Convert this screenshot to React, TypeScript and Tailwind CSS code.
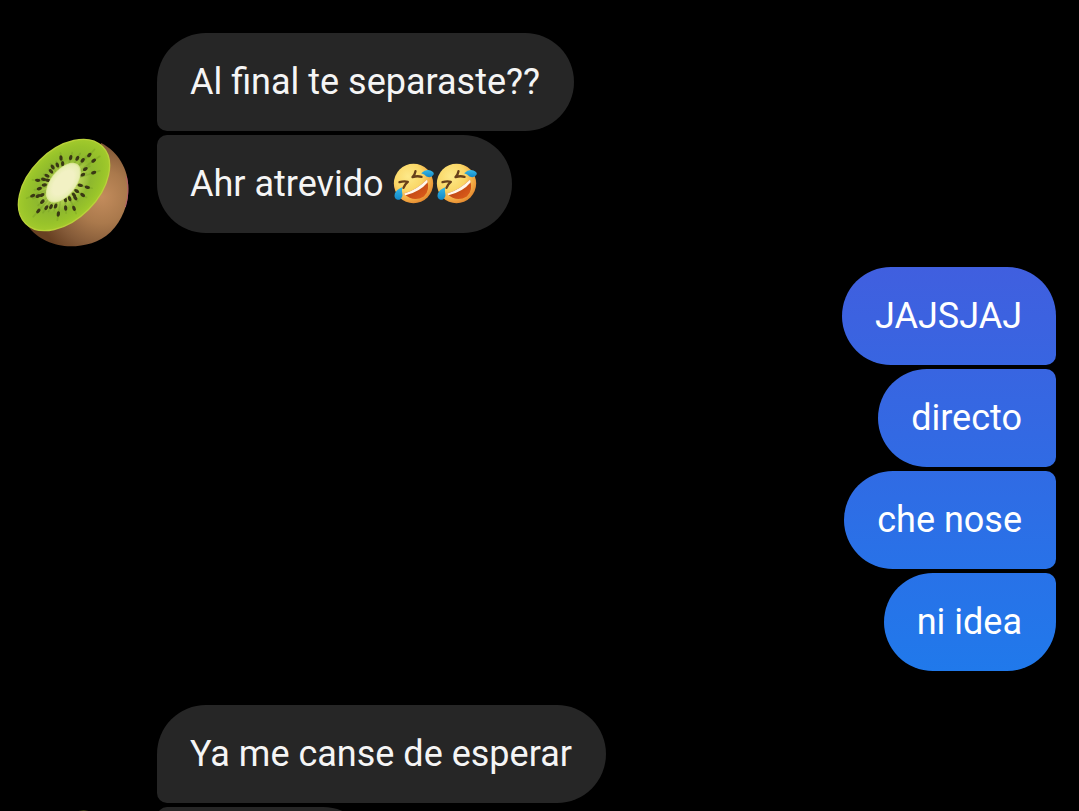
// App.tsx
import React from "react";
import clsx from "clsx";

// seed positions on the cut face of the kiwi
const seeds = [
  [268, 90], [281, 107], [256, 132], [281, 143], [248, 106], [232, 100],
  [212, 98], [188, 116], [183, 99], [172, 120], [153, 139], [158, 126],
  [141, 152], [113, 166], [131, 163], [144, 166], [133, 180], [118, 191],
  [98, 212], [114, 213], [126, 210], [127, 230], [115, 258], [139, 248],
  [153, 245], [175, 267], [168, 223], [167, 243], [196, 224], [197, 249],
  [209, 221], [222, 250], [222, 210], [226, 219], [248, 210], [230, 198],
  [241, 181], [262, 187], [248, 149],
];

const CORE_X = 190;
const CORE_Y = 173;

function KiwiAvatar() {
  return (
    <svg
      viewBox="51 30 339 336"
      className="block h-28 w-[113px] shrink-0"
      role="img"
      aria-label="Kiwi"
    >
      <defs>
        <radialGradient id="skin" gradientUnits="userSpaceOnUse" cx="305" cy="215" r="200">
          <stop offset="0" stopColor="#c38c5c" />
          <stop offset="0.4" stopColor="#aa794c" />
          <stop offset="0.75" stopColor="#845a38" />
          <stop offset="1" stopColor="#684022" />
        </radialGradient>
        <radialGradient id="flesh">
          <stop offset="0.3" stopColor="#bdd65c" />
          <stop offset="0.6" stopColor="#8eb82e" />
          <stop offset="0.85" stopColor="#98c32a" />
          <stop offset="1" stopColor="#a2ca2c" />
        </radialGradient>
        <radialGradient id="core">
          <stop offset="0.6" stopColor="#f2f1c4" />
          <stop offset="0.9" stopColor="#e8eeb2" />
          <stop offset="1" stopColor="#d4e28a" />
        </radialGradient>
      </defs>
      <path
        d="M304 54C354 80 385 132 385 190C385 240 366 287 332 321C298 353 254 364 211 364C165 364 109 342 82 300Z"
        fill="url(#skin)"
      />
      <path d="M379 155Q390 200 376 246" fill="none" stroke="#b5606c" strokeWidth="3" />
      <ellipse
        cx="192"
        cy="180"
        rx="163"
        ry="104"
        transform="rotate(-45 192 180)"
        fill="url(#flesh)"
        stroke="#b9d23a"
        strokeWidth="4"
      />
      {/* darker rays between core and rim */}
      {seeds.map(([x, y], i) => (
        <line
          key={i}
          x1={CORE_X}
          y1={CORE_Y}
          x2={CORE_X + (x - CORE_X) * 1.2}
          y2={CORE_Y + (y - CORE_Y) * 1.2}
          stroke="#60891a"
          strokeOpacity="0.25"
          strokeWidth="5"
          strokeLinecap="round"
        />
      ))}
      {seeds.map(([x, y], i) => (
        <ellipse
          key={i}
          cx={x}
          cy={y}
          rx="8"
          ry="5"
          transform={`rotate(${(Math.atan2(y - CORE_Y, x - CORE_X) * 180) / Math.PI} ${x} ${y})`}
          fill="#3a3814"
        />
      ))}
      <ellipse
        cx={CORE_X}
        cy={CORE_Y}
        rx="70"
        ry="38"
        transform="rotate(-52 190 173)"
        fill="url(#core)"
      />
    </svg>
  );
}

function RoflEmoji() {
  return (
    <svg
      viewBox="35.5 37.5 129 129"
      className="inline-block size-[43px] align-top"
      role="img"
      aria-label="🤣"
    >
      <defs>
        <radialGradient id="face" cx="0.36" cy="0.32" r="0.72">
          <stop offset="0" stopColor="#fde98a" />
          <stop offset="0.5" stopColor="#fad766" />
          <stop offset="0.8" stopColor="#f3ab44" />
          <stop offset="1" stopColor="#e58a30" />
        </radialGradient>
        <linearGradient id="mouth" x1="0" y1="0" x2="1" y2="1">
          <stop offset="0" stopColor="#a8360e" />
          <stop offset="1" stopColor="#e2601c" />
        </linearGradient>
        <linearGradient id="tear" x1="0" y1="0" x2="0" y2="1">
          <stop offset="0" stopColor="#36b9e8" />
          <stop offset="1" stopColor="#1287c6" />
        </linearGradient>
      </defs>
      <circle cx="100" cy="102" r="59" fill="url(#face)" />
      <path
        d="M58 98Q72 94 83 97Q74 104 70 115"
        fill="none"
        stroke="#67401a"
        strokeWidth="7"
        strokeLinejoin="round"
        strokeLinecap="round"
      />
      <path
        d="M106 65Q104 76 97 83Q111 78 124 82"
        fill="none"
        stroke="#67401a"
        strokeWidth="7"
        strokeLinejoin="round"
        strokeLinecap="round"
      />
      <path
        d="M71 133Q110 121 140 91Q151 123 131 141Q101 160 71 133Z"
        fill="url(#mouth)"
      />
      <path d="M71 133Q110 121 140 91Q143 95 142 99Q118 128 76 137Z" fill="#fff8ec" />
      <path d="M123 71Q137 58 151 63Q164 68 160 76Q153 87 139 81Q133 74 123 71Z" fill="url(#tear)" />
      <path d="M66 113Q50 119 44 132Q40 147 52 151Q65 151 67 137Q64 126 66 113Z" fill="url(#tear)" />
    </svg>
  );
}

interface BubbleProps {
  className?: string;
  children?: React.ReactNode;
}

function Bubble({ className, children }: BubbleProps) {
  return (
    <p
      className={clsx(
        "min-h-[98px] w-fit py-[27px] pr-[34px] pl-[33px] text-[36px] leading-[44px]",
        className
      )}
    >
      {children}
    </p>
  );
}

export default function App() {
  return (
    <main className="h-screen overflow-hidden bg-black pt-[33px] font-[Roboto,sans-serif] text-[#f5f5f5]">
      {/* received */}
      <section className="flex flex-col gap-1">
        <Bubble className="ml-[157px] rounded-[49px] rounded-bl-[10px] bg-[#262626]">
          Al final te separaste??
        </Bubble>
        <div className="flex items-start gap-[27px] pl-[17px]">
          <KiwiAvatar />
          <Bubble className="rounded-[49px] rounded-tl-[10px] bg-[#262626]">
            Ahr atrevido <RoflEmoji />
            <RoflEmoji />
          </Bubble>
        </div>
      </section>

      {/* sent */}
      <section className="mt-5 flex flex-col items-end gap-1 pr-[23px] text-white">
        <Bubble className="rounded-[49px] rounded-br-[10px] bg-linear-to-b from-[#405fdf] to-[#3865e1]">
          JAJSJAJ
        </Bubble>
        <Bubble className="rounded-[49px] rounded-r-[10px] bg-linear-to-b from-[#3865e1] to-[#306be4]">
          directo
        </Bubble>
        <Bubble className="rounded-[49px] rounded-r-[10px] bg-linear-to-b from-[#306be4] to-[#2872e8]">
          che nose
        </Bubble>
        <Bubble className="rounded-[49px] rounded-tr-[10px] bg-linear-to-b from-[#2872e8] to-[#2079eb]">
          ni idea
        </Bubble>
      </section>

      {/* received */}
      <section className="mt-[34px] flex flex-col gap-1">
        <Bubble className="ml-[157px] rounded-[49px] rounded-bl-[10px] bg-[#262626]">
          Ya me canse de esperar
        </Bubble>
        <div className="flex items-start gap-[27px] pl-[17px]">
          <KiwiAvatar />
          <Bubble className="min-w-[215px] rounded-[49px] rounded-tl-[10px] bg-[#262626]" />
        </div>
      </section>
    </main>
  );
}
